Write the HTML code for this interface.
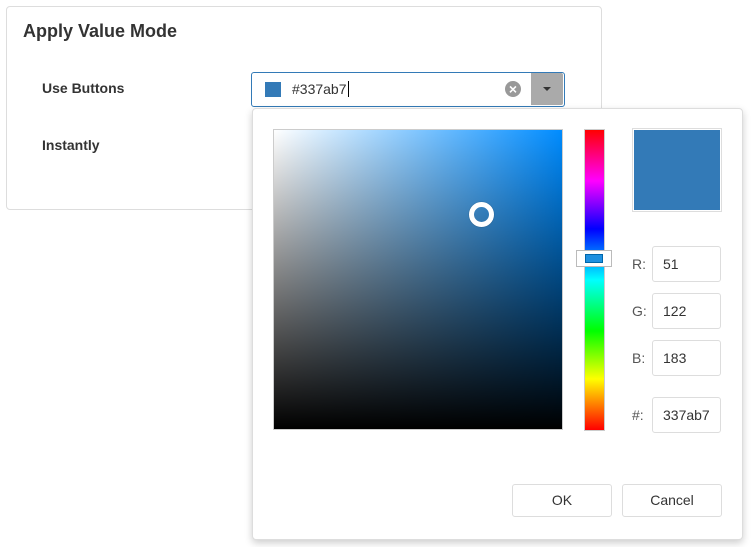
<!DOCTYPE html>
<html><head><style>
*{box-sizing:border-box}
body{margin:0;width:751px;height:547px;background:#fff;font-family:"Liberation Sans",Arial,sans-serif;color:#333;position:relative;overflow:hidden}
.abs{position:absolute}
.panel{left:6px;top:6px;width:596px;height:204px;border:1px solid #ddd;border-radius:4px}
h1{position:absolute;left:23px;top:21px;margin:0;font-size:18px;font-weight:bold;color:#333}
.lbl{font-size:14px;font-weight:bold;color:#333}
.input{left:251px;top:72px;width:314px;height:35px;border:1px solid #337ab7;border-radius:3px;background:#fff}
.pop{left:252px;top:108px;width:491px;height:432px;background:#fff;border:1px solid #ddd;border-radius:4px;box-shadow:0 3px 8px rgba(0,0,0,.2)}
.sv{left:273px;top:129px;width:290px;height:301px;border:1px solid #ccc;background:linear-gradient(to bottom,rgba(0,0,0,0),#000),linear-gradient(to right,#fff,rgb(0,140,255))}
.hue{left:584px;top:129px;width:21px;height:302px;border:1px solid #ccc;background:linear-gradient(to bottom,#f00,#f0f 17%,#00f 33%,#0ff 50%,#0f0 67%,#ff0 83%,#f00)}
.f{width:69px;height:36px;border:1px solid #ddd;border-radius:3px;font-size:14px;padding:9px 0 0 10px;color:#333}
.k{font-size:14px;color:#555}
.btn{width:100px;height:33px;border:1px solid #ddd;border-radius:3px;font-size:14px;text-align:center;line-height:31px;color:#333}
</style></head><body>
<div class="abs panel"></div>
<h1>Apply Value Mode</h1>
<div class="abs lbl" style="left:42px;top:80px">Use Buttons</div>
<div class="abs lbl" style="left:42px;top:137px">Instantly</div>
<div class="abs input"></div>
<div class="abs" style="left:265px;top:82px;width:16px;height:15px;background:#337ab7"></div>
<div class="abs" style="left:292px;top:81px;font-size:14px;color:#333">#337ab7<span style="border-left:1px solid #000;margin-left:1px"></span></div>
<div class="abs" style="left:505px;top:81px;width:16px;height:16px;border-radius:50%;background:#999;color:#fff;font-size:14px;font-weight:bold;line-height:16px;text-align:center">×</div>
<div class="abs" style="left:531px;top:73px;width:32px;height:32px;background:#aaa;border-radius:0 2px 2px 0"></div>
<div class="abs" style="left:543px;top:87px;width:0;height:0;border-left:4px solid transparent;border-right:4px solid transparent;border-top:4px solid #333"></div>
<div class="abs pop"></div>
<div class="abs sv"></div>
<div class="abs" style="left:469px;top:202px;width:25px;height:25px;border:5px solid #fff;border-radius:50%;box-shadow:0 0 1px rgba(0,0,0,.5)"></div>
<div class="abs hue"></div>
<div class="abs" style="left:576px;top:250px;width:36px;height:17px;border:1px solid #bbb;background:#fff"></div>
<div class="abs" style="left:585px;top:254px;width:18px;height:9px;background:#1e90e0;border:1px solid #0066aa"></div>
<div class="abs" style="left:632px;top:128px;width:90px;height:84px;border:1px solid #ddd;padding:1px"><div style="width:100%;height:100%;background:#337ab7"></div></div>
<div class="abs k" style="left:632px;top:256px">R:</div><div class="abs f" style="left:652px;top:246px">51</div>
<div class="abs k" style="left:632px;top:303px">G:</div><div class="abs f" style="left:652px;top:293px">122</div>
<div class="abs k" style="left:632px;top:350px">B:</div><div class="abs f" style="left:652px;top:340px">183</div>
<div class="abs k" style="left:632px;top:407px">#:</div><div class="abs f" style="left:652px;top:397px">337ab7</div>
<div class="abs btn" style="left:512px;top:484px">OK</div>
<div class="abs btn" style="left:622px;top:484px">Cancel</div>
</body></html>
